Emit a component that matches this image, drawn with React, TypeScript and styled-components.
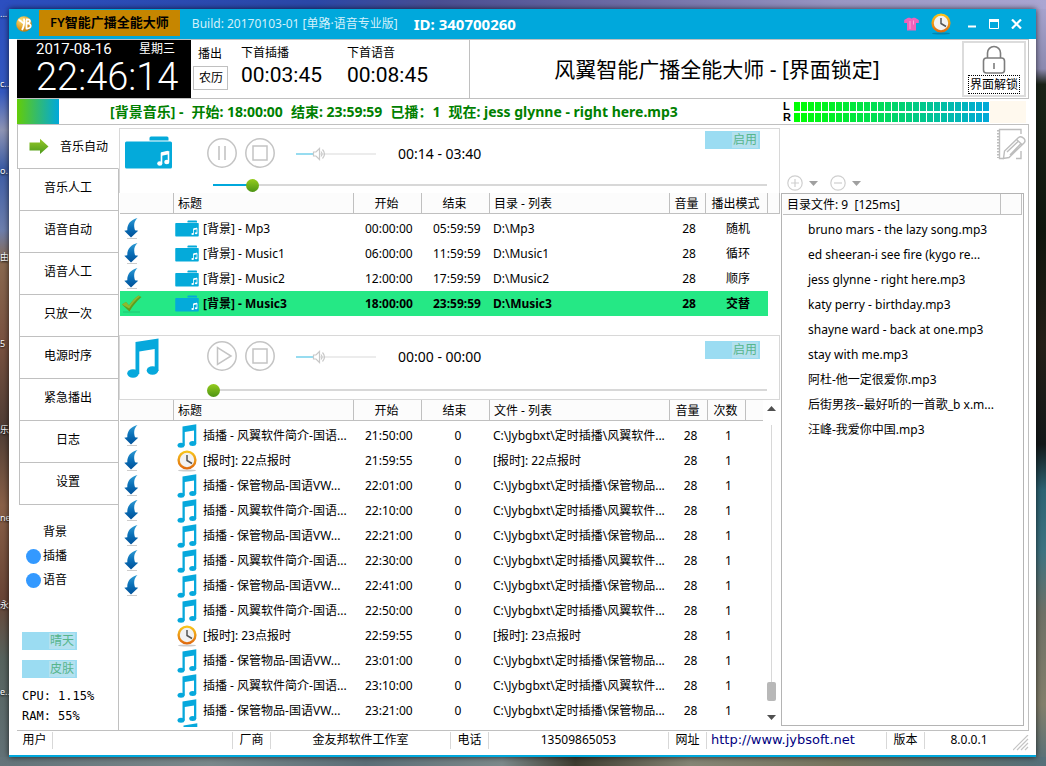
import React from "react";
import styled, { createGlobalStyle, css } from "styled-components";

const sans = `"Noto Sans", "Noto Sans CJK SC", sans-serif`;
const lcd = `"Roboto", sans-serif`;
const azure = "#00a8dc";
const line = "#c0c0c0";
const softLine = "#d8d8d8";

const GlobalStyle = createGlobalStyle`
  *, *::before, *::after { box-sizing: border-box; }
  html, body { margin: 0; padding: 0; }
  body { font: 12px/18px ${sans}; color: #000; }
  button { font: inherit; color: inherit; background: none; border: 0; padding: 0; margin: 0; }
`;

/* ---------- desktop and window frame ---------- */

const Desktop = styled.div`
  position: relative;
  min-height: 100vh;
  display: flex;
  padding: 9px 10px 9px 9px;
  overflow: hidden;
  background:
    linear-gradient(90deg, #2c4fc0 0%, #2b48a8 30%, #4a4f93 42%, #6f6da6 60%, #9a97c4 80%, #aaa6d2 100%) top / 100% 9px no-repeat,
    linear-gradient(90deg, #64747a 0%, #7b898c 20%, #5d6f78 35%, #7d8a8b 48%, #3f3d31 55%, #868676 66%, #77755f 80%, #56707a 100%) bottom / 100% 9px no-repeat,
    linear-gradient(180deg, #2c4fc0 0%, #3459c0 12%, #8f95b5 17%, #3c5ca6 22%, #6d7fae 30%, #8a6a50 34%, #7a5240 45%, #4f3d35 56%, #8a6148 66%, #6a4536 78%, #57635e 86%, #64747a 100%) left / 9px 100% no-repeat,
    linear-gradient(180deg, #aaa6d2 0%, #8d8bb0 9%, #1b2418 11%, #10160e 30%, #252018 45%, #14191a 58%, #2d6474 64%, #3f7482 72%, #6f7167 80%, #84806c 92%, #56707a 100%) right / 10px 100% no-repeat,
    #57635e;
`;

const DesktopLabel = styled.span<{ $top: number }>`
  position: absolute;
  left: 0;
  top: ${(p) => p.$top}px;
  font-size: 9px;
  white-space: nowrap;
  color: #fff;
  text-shadow: 0 1px 2px #000;
`;

const Window = styled.main`
  position: relative;
  flex: 1;
  min-width: 0;
  display: flex;
  flex-direction: column;
  background: #fff;
  border-bottom: 2px solid ${azure};
  box-shadow: 0 0 6px rgba(0, 0, 0, 0.7);
`;

const TitleBar = styled.header`
  height: 30px;
  display: flex;
  align-items: center;
  padding: 0 14px 0 7px;
  background: ${azure};
  color: #fff;
`;

const AppName = styled.h1`
  margin: 0 12px 3px 6px;
  height: 26px;
  padding: 0 11px;
  font-size: 13px;
  line-height: 25px;
  font-weight: 600;
  background: #c68600;
  color: #000;
  white-space: nowrap;
`;

const BuildText = styled.span`
  font-size: 12px;
  color: #d4f1fb;
  white-space: nowrap;
`;

const IdText = styled.strong`
  flex: 1;
  margin-left: 16px;
  font-size: 15px;
  white-space: nowrap;
`;

const TitleTools = styled.div`
  display: flex;
  align-items: center;
  gap: 12px;
`;

const WindowButton = styled.button`
  height: 20px;
  display: flex;
  align-items: center;
`;

const Body = styled.div`
  flex: 1;
  display: flex;
  flex-direction: column;
  padding: 0 7px 0 8px;
`;

/* ---------- top info strip ---------- */

const InfoStrip = styled.section`
  display: flex;
  height: 60px;
  border: solid ${line};
  border-width: 1px 1px 1px 0;
`;

const ClockPanel = styled.div`
  width: 174px;
  padding: 0 16px 0 19px;
  background: #000;
  color: #fff;
  display: flex;
  flex-direction: column;
`;

const DateRow = styled.div`
  display: flex;
  justify-content: space-between;
  height: 18px;
  line-height: 18px;
`;

const DateText = styled.span`
  font: 15px/18px ${lcd};
`;

const BigTime = styled.time`
  font: 300 38px/38px ${lcd};
  white-space: pre;
`;

const CalendarCol = styled.div`
  width: 37px;
  padding: 2px 0 0 2px;
  display: flex;
  flex-direction: column;
`;

const CalendarItem = styled.button<{ $boxed?: boolean }>`
  height: 24px;
  padding: 0 5px;
  text-align: left;
  white-space: nowrap;
  ${(p) => p.$boxed && css`border: 1px solid ${line};`}
`;

const NextBlock = styled.div`
  display: flex;
  width: 242px;
  padding: 4px 0 0 13px;
  border-right: 1px solid ${line};
`;

const NextItem = styled.div`
  width: 106px;
  display: flex;
  flex-direction: column;
`;

const NextTime = styled.time`
  font: 21px/26px ${lcd};
`;

const Headline = styled.h2`
  flex: 1;
  margin: 0;
  padding-left: 4px;
  font-size: 21px;
  line-height: 58px;
  font-weight: 400;
  text-align: center;
  white-space: nowrap;
`;

const UnlockButton = styled.button`
  width: 64px;
  margin: 1px 2px;
  border: 2px solid #dcdcdc;
  display: flex;
  flex-direction: column;
  align-items: center;
  justify-content: space-between;
  padding: 2px 0 1px;
`;

const UnlockText = styled.span`
  height: 19px;
  line-height: 17px;
  padding: 0 1px;
  border: 1px dotted #000;
`;

/* ---------- now playing strip ---------- */

const NowStrip = styled.section`
  display: flex;
  align-items: center;
  height: 26px;
  padding-right: 3px;
  border-bottom: 1px solid ${line};
`;

const Swatch = styled.div`
  width: 42px;
  height: 25px;
  background: linear-gradient(90deg, #63cc08, ${azure});
`;

const NowText = styled.p`
  flex: 1;
  display: flex;
  gap: 8px;
  margin: 0 0 0 51px;
  font-size: 14px;
  line-height: 24px;
  font-weight: 700;
  color: #008000;
  white-space: nowrap;
`;

const Meters = styled.div`
  display: flex;
  flex-direction: column;
  width: 243px;
`;

const MeterRow = styled.div`
  display: flex;
  align-items: center;
  height: 11px;
  font: 700 11px/11px "Liberation Sans", sans-serif;
`;

const MeterLabel = styled.span`
  width: 11px;
`;

const MeterTrack = styled.div`
  flex: 1;
  height: 11px;
  background: #fff9ee;
`;

const MeterFill = styled.div`
  width: 196px;
  height: 11px;
  border: solid #fff;
  border-width: 1px 0;
  background:
    repeating-linear-gradient(90deg, transparent 0 6px, #fff 6px 7px),
    linear-gradient(90deg, #00ff00, #00e050 40%, #00a8dc);
`;

/* ---------- side bar ---------- */

const Workspace = styled.div`
  flex: 1;
  display: flex;
  border: solid ${line};
  border-width: 0 1px 1px 0;
`;

const Sidebar = styled.aside`
  width: 102px;
  display: flex;
  flex-direction: column;
  flex: none;
`;

const Tabs = styled.nav`
  display: flex;
  flex-direction: column;
`;

const Tab = styled.button<{ $active?: boolean }>`
  height: 42px;
  margin-left: 2px;
  padding: 0 2px 4px 0;
  border: solid ${line};
  border-width: 0 1px 1px 1px;
  ${(p) =>
    p.$active &&
    css`
      height: 44px;
      margin-left: 0;
      border-right-color: transparent;
      display: flex;
      align-items: center;
      gap: 11px;
      padding: 0 0 0 11px;
    `}
`;

const SideInfo = styled.div`
  flex: 1;
  display: flex;
  flex-direction: column;
  padding: 15px 0 0 5px;
  border-right: 1px solid ${line};
`;

const ChannelList = styled.ul`
  list-style: none;
  margin: 0 0 40px 4px;
  padding: 0;
`;

const Channel = styled.li<{ $on?: boolean }>`
  display: flex;
  align-items: center;
  gap: 2px;
  height: 24px;
  &::before {
    content: "";
    width: 15px;
    height: 15px;
    border-radius: 50%;
    background: ${(p) => (p.$on ? "#3399ff" : "transparent")};
  }
`;

const Switch = styled.button`
  width: 55px;
  height: 18px;
  padding: 1px 2px;
  display: flex;
  justify-content: flex-end;
  background: #9bdcf2;
`;

const SwitchKnob = styled.span`
  width: 26px;
  height: 16px;
  line-height: 16px;
  text-align: center;
  color: #56b58c;
  background: #b4e1ef;
`;

const SwitchStack = styled.div`
  display: flex;
  flex-direction: column;
  gap: 10px;
  margin-bottom: 8px;
`;

const Usage = styled.p`
  margin: 0;
  font: 12px/20px "DejaVu Sans Mono", monospace;
  white-space: pre;
`;

/* ---------- player ---------- */

const Center = styled.section`
  flex: 1;
  min-width: 0;
  display: flex;
  flex-direction: column;
  padding-top: 3px;
`;

const Panel = styled.div<{ $closed?: boolean }>`
  display: grid;
  grid-template-columns: 87px 1fr auto;
  grid-template-rows: ${(p) => (p.$closed ? 46 : 48)}px ${(p) => (p.$closed ? 17 : 16)}px;
  border: solid ${softLine};
  border-width: 1px 1px 0 1px;
  ${(p) => p.$closed && css`border-bottom-width: 1px;`}
`;

const PanelIcon = styled.div<{ $closed?: boolean }>`
  grid-row: 1 / 3;
  padding: ${(p) => (p.$closed ? "2px 0 0 7px" : "7px 0 0 4px")};
`;

const Controls = styled.div<{ $closed?: boolean }>`
  display: flex;
  align-items: center;
  gap: 8px;
  padding-bottom: ${(p) => (p.$closed ? 6 : 0)}px;
`;

const RoundButton = styled.button`
  width: 30px;
  height: 30px;
`;

const PanelSwitch = styled.div<{ $closed?: boolean }>`
  padding: ${(p) => (p.$closed ? 5 : 2)}px 19px 0 0;
`;

const VolumeWrap = styled.div`
  position: relative;
  width: 80px;
  height: 14px;
  margin: 2px 14px 0 13px;
  display: flex;
`;

const VolumeIcon = styled.span`
  position: absolute;
  left: 16px;
  top: 0;
  height: 14px;
  pointer-events: none;
`;

const Range = styled.input<{ $fill: string; $rest: string; $color: string; $thumb: string }>`
  appearance: none;
  width: 100%;
  height: 16px;
  margin: 0;
  background: linear-gradient(90deg, ${(p) => p.$color} ${(p) => p.$fill}, ${(p) => p.$rest} ${(p) => p.$fill}) center / calc(100% - 12px) 2px no-repeat;
  &::-webkit-slider-thumb {
    appearance: none;
    width: 13px;
    height: 13px;
    border-radius: 50%;
    background: ${(p) => p.$thumb};
  }
`;

const Progress = styled(Range)`
  grid-column: 2 / 4;
  width: calc(100% - 6px);
`;

const Volume = styled(Range)`
  height: 14px;
  background-size: 100% 2px;
`;

const PlayTime = styled.time`
  padding-top: 2px;
  font-size: 14px;
  white-space: pre;
`;

/* ---------- tables ---------- */

const Table = styled.table`
  width: 100%;
  table-layout: fixed;
  border-collapse: collapse;
  border-spacing: 0;
`;

const Col = styled.col<{ $w?: number }>`
  ${(p) => p.$w && css`width: ${p.$w}px;`}
`;

const Th = styled.th<{ $center?: boolean }>`
  padding: 0 0 2px;
  height: 23px;
  font-weight: 400;
  text-align: ${(p) => (p.$center ? "center" : "left")};
  vertical-align: top;
`;

const HeadCell = styled.div<{ $center?: boolean; $open?: boolean }>`
  height: 21px;
  line-height: 21px;
  padding: ${(p) => (p.$center ? "0 2px 0 0" : "0 0 0 4px")};
  white-space: nowrap;
  background: #fcfcfc;
  border: solid ${line};
  border-width: 0 ${(p) => (p.$open ? 0 : 1)}px 1px 0;
`;

const Td = styled.td<{ $center?: boolean; $indent?: number }>`
  height: 25px;
  padding: 0 0 0 ${(p) => p.$indent ?? 0}px;
  text-align: ${(p) => (p.$center ? "center" : "left")};
  white-space: nowrap;
  overflow: hidden;
  text-overflow: ellipsis;
`;

const Tr = styled.tr<{ $current?: boolean }>`
  height: 25px;
  ${(p) =>
    p.$current &&
    css`
      font-weight: 700;
      ${Td}:not(:last-child) {
        background: #25e885;
      }
    `}
`;

const IconText = styled.div<{ $gap: number }>`
  display: flex;
  align-items: center;
  gap: ${(p) => p.$gap}px;
  height: 25px;
`;

const IconSlot = styled.div`
  display: flex;
  height: 25px;
  align-items: center;
`;

const PeekCell = styled.td`
  padding: 0 0 0 4px;
`;

const Peek = styled.div`
  height: 4px;
  overflow: hidden;
`;

const ScrollArea = styled.div`
  display: flex;
  flex: 1;
`;

const MusicTable = styled.div`
  padding: 0 0 19px 1px;
`;

const CueTable = styled.div`
  flex: 1;
  min-width: 0;
  padding-left: 1px;
`;

const ScrollBar = styled.div`
  width: 17px;
  padding: 6px 0 10px;
  display: flex;
  flex-direction: column;
  align-items: center;
`;

const ScrollLine = styled.div<{ $grow?: boolean }>`
  width: 1px;
  margin-top: ${(p) => (p.$grow ? 14 : 0)}px;
  background: ${softLine};
  ${(p) => (p.$grow ? css`flex: 1;` : css`height: 14px; background: none;`)}
`;

const ScrollThumb = styled.div`
  width: 9px;
  height: 19px;
  border-radius: 2px;
  background: #b8b8b8;
`;

/* ---------- file list ---------- */

const FilePane = styled.aside`
  width: 248px;
  flex: none;
  display: flex;
  flex-direction: column;
  padding: 3px 4px 4px 1px;
`;

const FileTools = styled.div`
  display: flex;
  height: 65px;
  align-items: flex-end;
  padding: 0 0 2px 6px;
  gap: 5px;
`;

const ToolButton = styled.button`
  height: 16px;
  display: flex;
  align-items: center;
  gap: 6px;
  margin-right: 7px;
`;

const EditButton = styled.button`
  margin-left: auto;
  align-self: flex-start;
  height: 32px;
  margin-right: -2px;
`;

const FileBox = styled.section`
  flex: 1;
  border: 1px solid #b4b4b4;
  display: flex;
  flex-direction: column;
`;

const FileHead = styled.div`
  display: flex;
  height: 21px;
  margin: 0 1px;
  border-bottom: 1px solid ${line};
  line-height: 21px;
  background: #fcfcfc;
`;

const FileTitle = styled.h3`
  flex: 1;
  margin: 0;
  padding-left: 4px;
  font-size: 12px;
  font-weight: 400;
  white-space: pre;
  border-right: 1px solid ${line};
`;

const FileHeadEnd = styled.div`
  width: 21px;
  border-right: 1px solid ${line};
`;

const FileList = styled.ul`
  list-style: none;
  margin: 2px 0 0;
  padding: 0 26px;
`;

const FileItem = styled.li`
  height: 25px;
  line-height: 25px;
  white-space: nowrap;
`;

/* ---------- status bar ---------- */

const StatusBar = styled.footer`
  display: flex;
  height: 24px;
  padding-top: 1px;
`;

const StatusCell = styled.div<{ $w?: number; $last?: boolean; $left?: boolean }>`
  ${(p) => (p.$w ? css`width: ${p.$w}px;` : css`flex: 1;`)}
  height: 17px;
  line-height: 16px;
  text-align: ${(p) => (p.$left ? "left" : "center")};
  text-indent: ${(p) => (p.$left ? 4 : 0)}px;
  border-right: ${(p) => (p.$last ? "0" : `1px solid ${softLine}`)};
  white-space: nowrap;
`;

const SiteLink = styled.a`
  font: 13px/16px "DejaVu Sans", sans-serif;
  color: #000080;
  text-decoration: none;
`;

const Grip = styled.span`
  margin-left: auto;
  height: 20px;
  padding-top: 3px;
`;

/* ---------- icons ---------- */

const Logo = () => (
  <svg width="17" height="18" viewBox="0 0 17 18" aria-hidden="true">
    <defs>
      <radialGradient id="gold" cx="0.35" cy="0.25" r="0.9">
        <stop offset="0" stopColor="#ffe27a" />
        <stop offset="0.6" stopColor="#dc9a20" />
        <stop offset="1" stopColor="#a8680a" />
      </radialGradient>
    </defs>
    <circle cx="8" cy="9" r="7.800" fill="url(#gold)" />
    <path d="M2.500 5C5 5 6 8 8 8.500M8 3.500c.5 4 0 8-2 11.500M10 4.500c5-1 5 3.500 1 4 5-.5 5 5.500-.5 5V5" fill="none" stroke="#fff" strokeWidth="1.800" />
  </svg>
);

const Shirt = () => (
  <svg width="15" height="14" viewBox="0 0 15 14" aria-hidden="true">
    <path d="M4 .8H6Q7.500 2 9 .8H11L14.800 3V6H12V13.500H3V6H.2V3Z" fill="#f062ba" />
    <path d="M6 4v8M9.500 3.500v4" stroke="#fba6dc" fill="none" />
  </svg>
);

const Clock = () => (
  <svg width="20" height="22" viewBox="0 0 20 22" aria-hidden="true">
    <defs>
      <linearGradient id="ring" x1="0" y1="0" x2="0" y2="1">
        <stop offset="0" stopColor="#f8c41c" />
        <stop offset="1" stopColor="#e06c10" />
      </linearGradient>
    </defs>
    <ellipse cx="10" cy="20.500" rx="9" ry="1" fill="#000" opacity="0.2" />
    <circle cx="10" cy="10" r="8.400" fill="#f2f2f2" stroke="url(#ring)" strokeWidth="2.400" />
    <path d="M10 5v5.500l5 3" fill="none" stroke="#555" strokeWidth="1.500" />
  </svg>
);

const Lock = () => (
  <svg width="24" height="29" viewBox="0 0 24 29" fill="none" stroke="#7d7d7d" strokeWidth="1.600" aria-hidden="true">
    <rect x="1.500" y="13" width="21" height="15" rx="3" />
    <path d="M5.500 13V8a6.500 6.500 0 0 1 13 0v5M12 18v6" />
  </svg>
);

const GreenArrow = () => (
  <svg width="20" height="17" viewBox="0 0 20 17" aria-hidden="true">
    <defs>
      <linearGradient id="leaf" x1="0" y1="0" x2="0" y2="1">
        <stop offset="0" stopColor="#96c828" />
        <stop offset="1" stopColor="#4c9a1c" />
      </linearGradient>
    </defs>
    <path d="M.5 4.500H11V.8L19.500 8.500 11 16V12.500H.5Z" fill="url(#leaf)" />
  </svg>
);

const DownArrow = () => (
  <svg width="16" height="21" viewBox="0 0 16 21" aria-hidden="true">
    <defs>
      <linearGradient id="sea" x1="0" y1="0" x2="0" y2="1">
        <stop offset="0" stopColor="#2f9cd4" />
        <stop offset="0.5" stopColor="#0a70b8" />
        <stop offset="1" stopColor="#005098" />
      </linearGradient>
    </defs>
    <path d="M3 20.500h10" stroke="#ccc" />
    <path d="M13.500 0C7 1.500 3 6 3.300 12.300L.3 12.800 7 19.500 14.200 12.800 11 12.300C9.500 7 10 3.500 13.500 0Z" fill="url(#sea)" />
  </svg>
);

const Check = () => (
  <svg width="21" height="18" viewBox="0 0 21 18" aria-hidden="true">
    <path d="M2 17h17" stroke="#1eb068" opacity="0.6" />
    <path d="M1 9.500L5 7 8 10.500C11 6 14 3 17.500 .5L20.500 2C15.500 6.500 12 10.500 8.500 16.500Z" fill="#5f9c1e" />
    <path d="M1 9.500L5 7 8 10.500C11 6 14 3 17.500 .5L19 1.200C14 5 11 9 8.200 13.500Z" fill="#8cba30" />
  </svg>
);

const Folder = ({ w, h }: { w: number; h: number }) => (
  <svg width={w} height={h} viewBox="0 0 48 33" aria-hidden="true">
    <path d="M25 4.500V2Q25 .5 26.500 .5H42.500Q44 .5 44 2V4.500Z" fill="#04aada" />
    <rect x="0.500" y="5.500" width="47" height="27" rx="1.500" fill="#04aada" />
    <path d="M37 27V17.500L44 16V25.500" fill="none" stroke="#fff" strokeWidth="1.600" />
    <path d="M37 18L44 16.500" stroke="#fff" strokeWidth="3.500" />
    <ellipse cx="35.300" cy="27.500" rx="2.600" ry="2.200" fill="#fff" />
    <ellipse cx="42.300" cy="26" rx="2.600" ry="2.200" fill="#fff" />
  </svg>
);

const Note = ({ w, h }: { w: number; h: number }) => (
  <svg width={w} height={h} viewBox="0 0 32 40" fill="#06a8dc" aria-hidden="true">
    <path d="M8.500 4L31.500 .5V33H27.700V11L12.300 13.500V36H8.500Z" />
    <ellipse cx="6" cy="35.500" rx="5.800" ry="4.200" />
    <ellipse cx="25.500" cy="32.500" rx="5.800" ry="4.200" />
  </svg>
);

const RoundGlyph = ({ kind }: { kind: "pause" | "stop" | "play" }) => (
  <svg width="30" height="30" viewBox="0 0 30 30" fill="none" stroke="#c4c4c4" strokeWidth="1.500" aria-hidden="true">
    <circle cx="15" cy="15" r="14.200" />
    {kind === "pause" && <path d="M12 8v14M18 8v14" strokeWidth="1.600" />}
    {kind === "stop" && <rect x="8" y="8" width="14" height="14" />}
    {kind === "play" && <path d="M10.500 6.500V23.500L24 15Z" />}
  </svg>
);

const Speaker = () => (
  <svg width="14" height="14" viewBox="0 0 14 14" fill="#fff" stroke="#c8c8c8" strokeWidth="1.200" aria-hidden="true">
    <path d="M1.500 5H4L7.500 1.500V12.500L4 9H1.500Z" />
    <path d="M9 4.500q2 2.500 0 5M10.500 2.500q4 4.500 0 9" fill="none" />
  </svg>
);

const SignCircle = ({ plus }: { plus?: boolean }) => (
  <svg width="16" height="16" viewBox="0 0 16 16" fill="none" stroke="#cfcfcf" strokeWidth="1.200" aria-hidden="true">
    <circle cx="8" cy="8" r="7.200" />
    <path d={plus ? "M4 8h8M8 4v8" : "M4 8h8"} />
  </svg>
);

const Triangle = ({ up, color }: { up?: boolean; color: string }) => (
  <svg width="9" height="5" viewBox="0 0 9 5" aria-hidden="true">
    <path d={up ? "M0 5L4.500 0 9 5Z" : "M0 0H9L4.500 5Z"} fill={color} />
  </svg>
);

const Notebook = () => (
  <svg width="29" height="32" viewBox="0 0 29 32" fill="none" stroke="#bdbdbd" strokeWidth="1.400" aria-hidden="true">
    <path d="M7 30.500H2.500V1.500H24V6M24 23V30.500H19" />
    <path d="M1 2v28" strokeDasharray="1.500 1.500" strokeWidth="2" />
    <path d="M6.500 30.500L7.500 23 21.500 9.500Q24 7.500 27 10.500 29 13 27 15L12 29.500ZM19.500 11.500L25.500 17M10 24L21 13.500M13 27L23.500 16" />
  </svg>
);

/* ---------- data ---------- */

const desktopLabels = [
  { top: 5, text: "..." },
  { top: 75, text: "c.." },
  { top: 162, text: "o." },
  { top: 248, text: "由" },
  { top: 335, text: "5" },
  { top: 421, text: "乐" },
  { top: 509, text: "ne" },
  { top: 596, text: "永" },
  { top: 683, text: "e.." },
];

const nowPlaying = [
  "[背景音乐] -",
  "开始: 18:00:00",
  "结束: 23:59:59",
  "已播：1",
  "现在: jess glynne - right here.mp3",
];

const tabs = ["音乐人工", "语音自动", "语音人工", "只放一次", "电源时序", "紧急播出", "日志", "设置"];

const folders = [
  { name: "Mp3", from: "00:00:00", to: "05:59:59", mode: "随机" },
  { name: "Music1", from: "06:00:00", to: "11:59:59", mode: "循环" },
  { name: "Music2", from: "12:00:00", to: "17:59:59", mode: "顺序" },
  { name: "Music3", from: "18:00:00", to: "23:59:59", mode: "交替", current: true },
];

const intro = { title: "插播 - 风翼软件简介-国语...", path: "C:\\Jybgbxt\\定时插播\\风翼软件..." };
const care = { title: "插播 - 保管物品-国语VW...", path: "C:\\Jybgbxt\\定时插播\\保管物品..." };
const chime = (h: number) => ({ title: `[报时]: ${h}点报时`, path: `[报时]: ${h}点报时`, chime: true });

type Cue = { title: string; path: string; chime?: boolean; at: string; queued?: boolean };

const cues: Cue[] = [
  { ...intro, at: "21:50:00", queued: true },
  { ...chime(22), at: "21:59:55", queued: true },
  { ...care, at: "22:01:00", queued: true },
  { ...intro, at: "22:10:00", queued: true },
  { ...care, at: "22:21:00", queued: true },
  { ...intro, at: "22:30:00", queued: true },
  { ...care, at: "22:41:00", queued: true },
  { ...intro, at: "22:50:00" },
  { ...chime(23), at: "22:59:55" },
  { ...care, at: "23:01:00" },
  { ...intro, at: "23:10:00" },
  { ...care, at: "23:21:00" },
];

const files = [
  "bruno mars - the lazy song.mp3",
  "ed sheeran-i see fire (kygo re...",
  "jess glynne - right here.mp3",
  "katy perry - birthday.mp3",
  "shayne ward - back at one.mp3",
  "stay with me.mp3",
  "阿杜-他一定很爱你.mp3",
  "后街男孩--最好听的一首歌_b x.m...",
  "汪峰-我爱你中国.mp3",
];

/* ---------- composed parts ---------- */

const Header = ({ text, center, open }: { text: string; center?: boolean; open?: boolean }) => (
  <Th $center={center}>
    <HeadCell $center={center} $open={open}>{text}</HeadCell>
  </Th>
);

const Player = (props: { closed?: boolean; time: string; position: number; volume: number; name: string }) => {
  const { closed, time, position, volume, name } = props;
  return (
    <Panel $closed={closed}>
      <PanelIcon $closed={closed}>{closed ? <Note w={32} h={40} /> : <Folder w={49} h={33} />}</PanelIcon>
      <Controls $closed={closed}>
        <RoundButton aria-label={closed ? "play" : "pause"}>
          <RoundGlyph kind={closed ? "play" : "pause"} />
        </RoundButton>
        <RoundButton aria-label="stop">
          <RoundGlyph kind="stop" />
        </RoundButton>
        <VolumeWrap>
          <Volume type="range" aria-label={`${name} volume`} defaultValue={volume} $fill="28%" $color="#97dcf0" $rest="#ececec" $thumb="transparent" />
          <VolumeIcon><Speaker /></VolumeIcon>
        </VolumeWrap>
        <PlayTime>{time}</PlayTime>
      </Controls>
      <PanelSwitch $closed={closed}>
        <Switch role="switch" aria-checked="true"><SwitchKnob>启用</SwitchKnob></Switch>
      </PanelSwitch>
      <Progress
        type="range"
        aria-label={`${name} position`}
        defaultValue={position}
        $fill={`${position}%`}
        $color={azure}
        $rest={softLine}
        $thumb="linear-gradient(#96cc1e, #4c9414)"
      />
    </Panel>
  );
};

export default function App() {
  return (
    <Desktop>
      <GlobalStyle />
      {desktopLabels.map((l) => (
        <DesktopLabel key={l.top} $top={l.top}>{l.text}</DesktopLabel>
      ))}
      <Window>
        <TitleBar>
          <Logo />
          <AppName>FY智能广播全能大师</AppName>
          <BuildText>Build: 20170103-01 [单路·语音专业版]</BuildText>
          <IdText>ID: 340700260</IdText>
          <TitleTools>
            <WindowButton aria-label="skin"><Shirt /></WindowButton>
            <WindowButton aria-label="clock"><Clock /></WindowButton>
            <WindowButton aria-label="minimize">
              <svg width="14" height="12" viewBox="0 0 14 12"><path d="M5 8.500h8" stroke="#fff" strokeWidth="2" /></svg>
            </WindowButton>
            <WindowButton aria-label="maximize">
              <svg width="10" height="10" viewBox="0 0 10 10"><path d="M.5 1V9.500H9.500V1" fill="none" stroke="#fff" /><path d="M0 1.500h10" stroke="#fff" strokeWidth="3" /></svg>
            </WindowButton>
            <WindowButton aria-label="close">
              <svg width="11" height="10" viewBox="0 0 11 10"><path d="M1 .5L10 9.500M10 .5L1 9.500" stroke="#fff" strokeWidth="2.200" /></svg>
            </WindowButton>
          </TitleTools>
        </TitleBar>

        <Body>
          <InfoStrip>
            <ClockPanel>
              <DateRow>
                <DateText>2017-08-16</DateText>
                <span>星期三</span>
              </DateRow>
              <BigTime>22:46:14</BigTime>
            </ClockPanel>
            <CalendarCol>
              <CalendarItem>播出</CalendarItem>
              <CalendarItem $boxed>农历</CalendarItem>
            </CalendarCol>
            <NextBlock>
              <NextItem>
                <span>下首插播</span>
                <NextTime>00:03:45</NextTime>
              </NextItem>
              <NextItem>
                <span>下首语音</span>
                <NextTime>00:08:45</NextTime>
              </NextItem>
            </NextBlock>
            <Headline>风翼智能广播全能大师 - [界面锁定]</Headline>
            <UnlockButton>
              <Lock />
              <UnlockText>界面解锁</UnlockText>
            </UnlockButton>
          </InfoStrip>

          <NowStrip>
            <Swatch />
            <NowText>
              {nowPlaying.map((t) => <span key={t}>{t}</span>)}
            </NowText>
            <Meters>
              {["L", "R"].map((ch) => (
                <MeterRow key={ch}>
                  <MeterLabel>{ch}</MeterLabel>
                  <MeterTrack><MeterFill /></MeterTrack>
                </MeterRow>
              ))}
            </Meters>
          </NowStrip>

          <Workspace>
            <Sidebar>
              <Tabs>
                <Tab $active><GreenArrow />音乐自动</Tab>
                {tabs.map((t) => <Tab key={t}>{t}</Tab>)}
              </Tabs>
              <SideInfo>
                <ChannelList>
                  <Channel>背景</Channel>
                  <Channel $on>插播</Channel>
                  <Channel $on>语音</Channel>
                </ChannelList>
                <SwitchStack>
                  <Switch role="switch" aria-checked="true"><SwitchKnob>晴天</SwitchKnob></Switch>
                  <Switch role="switch" aria-checked="true"><SwitchKnob>皮肤</SwitchKnob></Switch>
                </SwitchStack>
                <Usage>CPU: 1.15%</Usage>
                <Usage>RAM: 55%</Usage>
              </SideInfo>
            </Sidebar>

            <Center>
              <Player name="music" time="00:14 - 03:40" position={7} volume={28} />
              <MusicTable>
                <Table>
                  <colgroup>
                    <Col $w={54} /><Col /><Col $w={68} /><Col $w={68} /><Col /><Col $w={36} /><Col $w={62} /><Col $w={12} />
                  </colgroup>
                  <thead>
                    <tr>
                      <Header text="" />
                      <Header text="标题" />
                      <Header text="开始" center />
                      <Header text="结束" center />
                      <Header text="目录 - 列表" />
                      <Header text="音量" center />
                      <Header text="播出模式" center />
                      <Header text="" />
                    </tr>
                  </thead>
                  <tbody>
                    {folders.map((f) => (
                      <Tr key={f.name} $current={f.current}>
                        <Td $indent={f.current ? 1 : 4}><IconSlot>{f.current ? <Check /> : <DownArrow />}</IconSlot></Td>
                        <Td $indent={1}><IconText $gap={4}><Folder w={24} h={17} />[背景] - {f.name}</IconText></Td>
                        <Td $indent={11}>{f.from}</Td>
                        <Td $indent={11}>{f.to}</Td>
                        <Td $indent={3}>{`D:\\${f.name}`}</Td>
                        <Td $center $indent={2}>28</Td>
                        <Td $center $indent={2}>{f.mode}</Td>
                        <Td />
                      </Tr>
                    ))}
                  </tbody>
                </Table>
              </MusicTable>

              <Player name="cue" closed time="00:00 - 00:00" position={0} volume={28} />
              <ScrollArea>
                <CueTable>
                  <Table>
                    <colgroup>
                      <Col $w={54} /><Col /><Col $w={68} /><Col $w={68} /><Col /><Col $w={38} /><Col $w={38} /><Col $w={17} />
                    </colgroup>
                    <thead>
                      <tr>
                        <Header text="" />
                        <Header text="标题" />
                        <Header text="开始" center />
                        <Header text="结束" center />
                        <Header text="文件 - 列表" />
                        <Header text="音量" center />
                        <Header text="次数" center />
                        <Header text="" open />
                      </tr>
                    </thead>
                    <tbody>
                      {cues.map((c) => (
                        <Tr key={c.at}>
                          <Td $indent={4}>{c.queued && <IconSlot><DownArrow /></IconSlot>}</Td>
                          <Td $indent={3}><IconText $gap={6}>{c.chime ? <Clock /> : <Note w={20} h={24} />}{c.title}</IconText></Td>
                          <Td $indent={11}>{c.at}</Td>
                          <Td $center $indent={4}>0</Td>
                          <Td $indent={3}>{c.path}</Td>
                          <Td $center $indent={3}>28</Td>
                          <Td $center $indent={3}>1</Td>
                          <Td />
                        </Tr>
                      ))}
                      <tr>
                        <td />
                        <PeekCell><Peek><Note w={20} h={24} /></Peek></PeekCell>
                      </tr>
                    </tbody>
                  </Table>
                </CueTable>
                <ScrollBar>
                  <Triangle up color="#505050" />
                  <ScrollLine $grow />
                  <ScrollThumb />
                  <ScrollLine />
                  <Triangle color="#505050" />
                </ScrollBar>
              </ScrollArea>
            </Center>

            <FilePane>
              <FileTools>
                <ToolButton aria-label="add"><SignCircle plus /><Triangle color="#a0a0a0" /></ToolButton>
                <ToolButton aria-label="remove"><SignCircle /><Triangle color="#a0a0a0" /></ToolButton>
                <EditButton aria-label="edit"><Notebook /></EditButton>
              </FileTools>
              <FileBox>
                <FileHead>
                  <FileTitle>{"目录文件: 9  [125ms]"}</FileTitle>
                  <FileHeadEnd />
                </FileHead>
                <FileList>
                  {files.map((f) => <FileItem key={f}>{f}</FileItem>)}
                </FileList>
              </FileBox>
            </FilePane>
          </Workspace>

          <StatusBar>
            <StatusCell $w={36}>用户</StatusCell>
            <StatusCell />
            <StatusCell $w={38}>厂商</StatusCell>
            <StatusCell>金友邦软件工作室</StatusCell>
            <StatusCell $w={38}>电话</StatusCell>
            <StatusCell>13509865053</StatusCell>
            <StatusCell $w={38}>网址</StatusCell>
            <StatusCell $left><SiteLink href="http://www.jybsoft.net">http://www.jybsoft.net</SiteLink></StatusCell>
            <StatusCell $w={38}>版本</StatusCell>
            <StatusCell $w={88} $last>8.0.0.1</StatusCell>
            <Grip>
              <svg width="16" height="16" viewBox="0 0 16 16" stroke="#c4c4c4" strokeWidth="1.200" aria-hidden="true">
                <path d="M0 15L15 0M4 15L15 4M8 15L15 8M12 15L15 12" />
              </svg>
            </Grip>
          </StatusBar>
        </Body>
      </Window>
    </Desktop>
  );
}
